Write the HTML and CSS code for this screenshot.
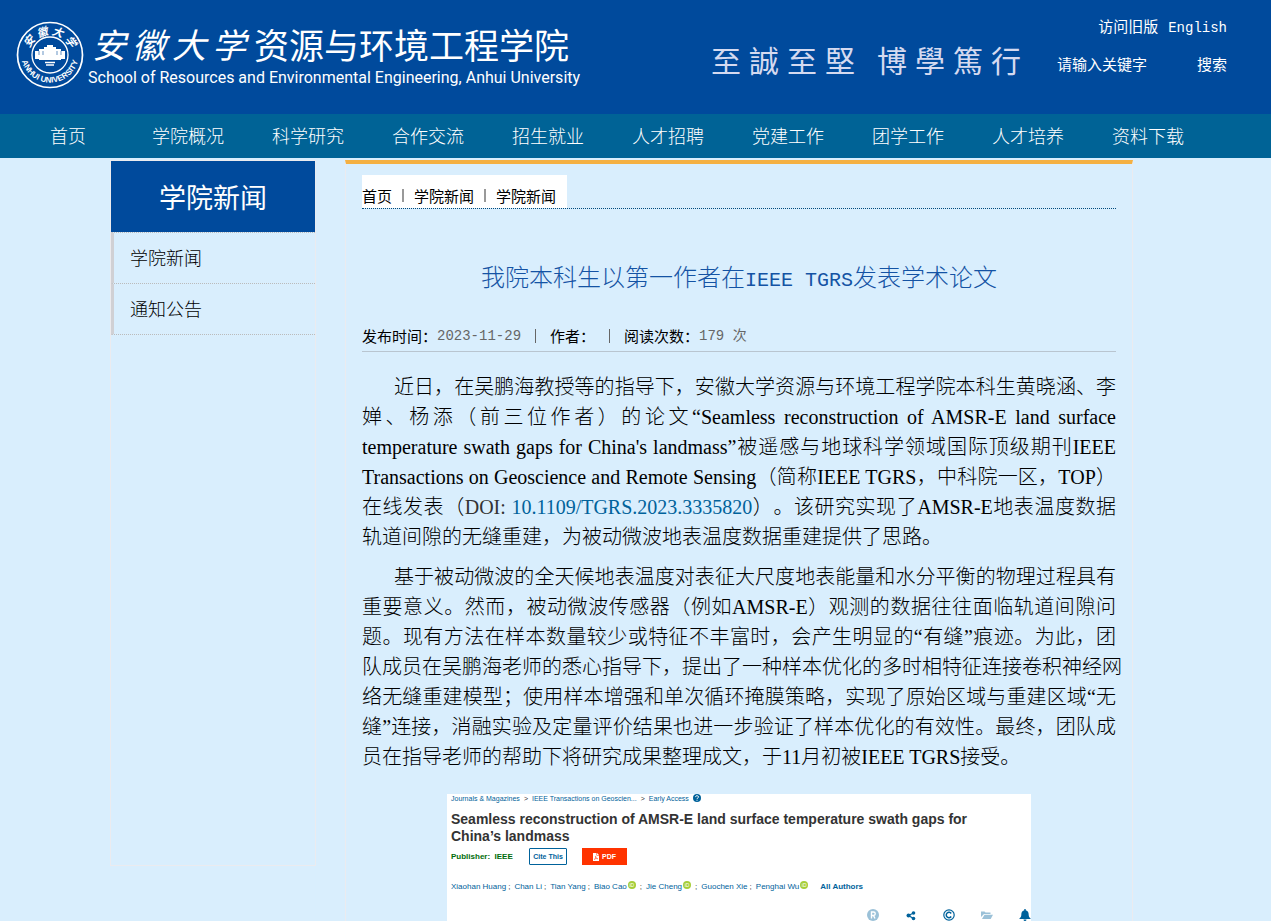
FILE: index.html
```html
<!DOCTYPE html>
<html lang="zh-CN">
<head>
<meta charset="utf-8">
<title>我院本科生以第一作者在IEEE TGRS发表学术论文</title>
<link rel="stylesheet" href="styles.css">
</head>
<body>
<header class="header">
  <a class="logo" href="#">
    <svg class="emblem" viewBox="0 0 68 68" aria-hidden="true">
      <defs>
        <path id="arc-bottom" d="M5.500 38 A29 29 0 0 0 62.500 38"/>
        <path id="arc-top" d="M12 36 A22 22 0 0 1 56 36"/>
      </defs>
      <circle cx="34" cy="34" r="32.500" fill="none" stroke="#fff" stroke-width="1.700"/>
      <circle cx="34" cy="34" r="18" fill="none" stroke="#fff" stroke-width="1.300"/>
      <path fill="#fff" d="M19 30h4v-2h5v-2h3v-2h6v2h3v2h5v2h4v8h-4v1H23v-1h-4z"/>
      <path stroke="#004a9c" stroke-width=".6" d="M23 30v4M27 30v4M41 30v4M45 30v4"/>
      <path stroke="#fff" stroke-width="1.500" d="M29 41.500h10M30 44h8"/>
      <text class="emblem-cn"><textPath href="#arc-top" startOffset="50%" text-anchor="middle">安 徽 大 学</textPath></text>
      <text class="emblem-en"><textPath href="#arc-bottom" startOffset="50%" text-anchor="middle">ANHUI UNIVERSITY</textPath></text>
    </svg>
    <span class="names">
      <span class="cn">
        <span class="brush"><i>安</i><i>徽</i><i>大</i><i>学</i></span>
        <span class="school">资源与环境工程学院</span>
      </span>
      <span class="en">School of Resources and Environmental Engineering, Anhui University</span>
    </span>
  </a>
  <div class="motto"><span>至</span><span>誠</span><span>至</span><span>堅</span><span class="second">博</span><span>學</span><span>篤</span><span>行</span></div>
  <div class="tools">
    <div class="links"><a href="#">访问旧版</a><a class="mono" href="#">English</a></div>
    <form class="search">
      <input type="text" aria-label="请输入关键字" placeholder="请输入关键字">
      <button type="button">搜索</button>
    </form>
  </div>
</header>
<nav class="nav">
  <a href="#">首页</a><a href="#">学院概况</a><a href="#">科学研究</a><a href="#">合作交流</a><a href="#">招生就业</a><a href="#">人才招聘</a><a href="#">党建工作</a><a href="#">团学工作</a><a href="#">人才培养</a><a href="#">资料下载</a>
</nav>
<div class="page">
  <aside class="side">
    <h2>学院新闻</h2>
    <a href="#">学院新闻</a>
    <a href="#">通知公告</a>
  </aside>
  <main class="main">
    <div class="crumbs"><div class="path"><a href="#">首页</a><i></i><a href="#">学院新闻</a><i></i><a href="#">学院新闻</a></div></div>
    <h1>我院本科生以第一作者在<span>IEEE TGRS</span>发表学术论文</h1>
    <div class="meta">
      <span>发布时间：</span><em>2023-11-29</em><i></i><span>作者：</span><i></i><span>阅读次数：</span><em>179 次</em>
    </div>
    <article class="text">
      <p>近日，在吴鹏海教授等的指导下，安徽大学资源与环境工程学院本科生黄晓涵、李婵、杨添（前三位作者）的论文“Seamless reconstruction of AMSR-E land surface temperature swath gaps for China's landmass”被遥感与地球科学领域国际顶级期刊IEEE Transactions on Geoscience and Remote Sensing（简称IEEE TGRS，中科院一区，TOP）在线发表（<span class="doi">DOI: </span><a href="#">10.1109/TGRS.2023.3335820</a>）。该研究实现了AMSR-E地表温度数据轨道间隙的无缝重建，为被动微波地表温度数据重建提供了思路。</p>
      <p>基于被动微波的全天候地表温度对表征大尺度地表能量和水分平衡的物理过程具有重要意义。然而，被动微波传感器（例如AMSR-E）观测的数据往往面临轨道间隙问题。现有方法在样本数量较少或特征不丰富时，会产生明显的“有缝”痕迹。为此，团<span class="keep">队成员在吴鹏海老师的悉心指导下，提出了一种样本优化的多时相特征连接卷积神经网</span>络无缝重建模型；使用样本增强和单次循环掩膜策略，实现了原始区域与重建区域“无缝”连接，消融实验及定量评价结果也进一步验证了样本优化的有效性。最终，团队成员在指导老师的帮助下将研究成果整理成文，于11月初被IEEE TGRS接受。</p>
    </article>
    <section class="paper" lang="en">
      <div class="trail"><a href="#">Journals &amp; Magazines</a><span>&gt;</span><a href="#">IEEE Transactions on Geoscien...</a><span>&gt;</span><a href="#">Early Access</a>
        <svg viewBox="0 0 16 16" aria-hidden="true"><circle cx="8" cy="8" r="8" fill="#00629b"/><path d="M5 6.200C5 2.500 11 2.500 11 6c0 2-3 2-3 4M8 11.500v2" fill="none" stroke="#fff" stroke-width="2"/></svg>
      </div>
      <h3>Seamless reconstruction of AMSR-E land surface temperature swath gaps for<br>China’s landmass</h3>
      <div class="actions">
        <b>Publisher:&nbsp; IEEE</b>
        <button class="cite" type="button">Cite This</button>
        <button class="pdf" type="button"><svg viewBox="0 0 12 16" aria-hidden="true"><path fill="#fff" d="M0 0h7v5h5v11H0zM8 0l4 4H8z"/><path d="M2.500 13c2-1 4-5 3-6.500S4 10 9.500 11.500C7 10.500 4 11.500 2.500 13z" fill="none" stroke="#ff3300"/></svg>PDF</button>
      </div>
      <div class="authors">
        <a href="#">Xiaohan Huang</a><s>;</s><a href="#">Chan Li</a><s>;</s><a href="#">Tian Yang</a><s>;</s><a href="#">Biao Cao</a><u>iD</u><s>;</s><a href="#">Jie Cheng</a><u>iD</u><s>;</s><a href="#">Guochen Xie</a><s>;</s><a href="#">Penghai Wu</a><u>iD</u><a class="all" href="#">All Authors</a>
      </div>
      <div class="icons">
        <svg class="dim" viewBox="0 0 12 12" aria-hidden="true"><circle cx="6" cy="6" r="6"/><path d="M4.500 9.500v-6.500h2a1.700 1.700 0 0 1 0 3.500h-2M6.500 6.500l1.500 3" fill="none" stroke="#fff" stroke-width="1.400"/></svg>
        <svg viewBox="0 0 12 12" aria-hidden="true"><circle cx="3.500" cy="6.500" r="2"/><circle cx="8.500" cy="4" r="1.800"/><circle cx="8.500" cy="9.500" r="1.800"/><path d="M8.500 4l-5 2.500 5 3" fill="none" stroke="#00629b" stroke-width="1.200"/></svg>
        <svg viewBox="0 0 12 12" aria-hidden="true"><circle cx="6" cy="6" r="5.200" fill="none" stroke="#00629b" stroke-width="1.200"/><path d="M8.200 4.500a2.700 2.700 0 1 0 0 3" fill="none" stroke="#00629b" stroke-width="1.500"/></svg>
        <svg class="dim" viewBox="0 0 12 12" aria-hidden="true"><path d="M0 8V2.500h3.500l1 1H9.500v1.500H3z"/><path d="M3.500 5.700H12L9.700 10H1z"/></svg>
        <svg viewBox="0 0 12 12" aria-hidden="true"><path d="M5.300 0h1.400v1.200c2.500.6 3 2.500 3 4.800 0 1.500.8 2.500 1.800 3.300v.7H.5v-.7c1-.8 1.800-1.800 1.800-3.300 0-2.300.5-4.200 3-4.800zM4.500 10.500h3a1.500 1.500 0 0 1-3 0z"/></svg>
      </div>
    </section>
  </main>
</div>
</body>
</html>
```
FILE: styles.css
```css
* { box-sizing: border-box; }
body {
  margin: 0;
  min-height: 100vh;
  display: flex;
  flex-direction: column;
  background: #d9eefd;
  color: #000;
  font: 15px "Noto Sans CJK SC", sans-serif;
  font-weight: 300;
  text-spacing-trim: space-all;
}
a { color: inherit; text-decoration: none; }
i { font-style: normal; }
h1, h2, h3, p { margin: 0; font-weight: inherit; }

.header {
  display: flex;
  align-items: flex-start;
  height: 114px;
  padding: 0 44px 0 16px;
  background: #004a9c;
  color: #fff;
}
.logo { display: flex; gap: 4px; padding-top: 21px; }
.emblem { width: 68px; height: 68px; }
.emblem-cn { fill: #fff; font: italic bold 11px "Noto Sans CJK SC", sans-serif; }
.emblem-en { fill: #fff; font: bold 8px "Liberation Sans", sans-serif; }
.names { display: flex; flex-direction: column; white-space: nowrap; }
.cn { display: flex; gap: 8px; padding-left: 4px; line-height: 46px; }
.brush { display: flex; gap: 6px; }
.brush i { font-size: 34px; font-style: italic; font-weight: 400; }
.school { font-size: 35px; font-weight: 400; }
.en { font: 16px/22px Roboto, sans-serif; }
.motto {
  display: flex;
  gap: 8px;
  margin-left: auto;
  padding-top: 35px;
  color: #d5daf0;
  font: 30px/48px "Noto Sans CJK TC", sans-serif;
}
.motto .second { margin-left: 14px; }
.tools { margin-left: 36px; padding-top: 15px; }
.links { display: flex; justify-content: flex-end; align-items: baseline; gap: 10px; line-height: 22px; font-weight: 400; }
.mono { font: 14px/22px "Liberation Mono", monospace; }
.search { display: flex; justify-content: space-between; margin-top: 14px; }
.search input, .search button {
  padding: 0;
  border: 0;
  background: none;
  color: #fff;
  font: 15px/22px "Noto Sans CJK SC", sans-serif;
}
.search input { width: 140px; }
.search input::placeholder { color: #fff; }

.nav {
  display: flex;
  height: 44px;
  padding-left: 8px;
  background: #006396;
  color: #fff;
  font-size: 18px;
  line-height: 42px;
}
.nav a { flex: 0 0 120px; text-align: center; }

.page {
  flex: 1;
  display: flex;
  align-items: flex-start;
  width: 100%;
  max-width: 1051px;
  margin: 0 auto;
  padding: 2px 28px 0 0;
}
.side {
  flex: 0 0 206px;
  min-height: 706px;
  margin-right: 29px;
  border: 1px solid #ebebef;
}
.side h2 {
  background: #004a9c;
  color: #fff;
  font-size: 27px;
  font-weight: 400;
  line-height: 71px;
  text-align: center;
}
.side a {
  display: block;
  padding: 0 0 2px 16px;
  border-left: 3px solid #d0d0d4;
  border-top: 1px dotted #bbb;
  font-size: 18px;
  line-height: 48px;
}
.side a:last-child { border-bottom: 1px dotted #bbb; }

.main {
  flex: 1;
  min-width: 0;
  align-self: stretch;
  display: flex;
  flex-direction: column;
  padding: 11px 16px 0;
  border: 1px solid #ebebef;
  border-top: 4px solid #f4b042;
  border-bottom: 0;
}
.crumbs { border-bottom: 1px dotted #004a7c; }
.path {
  display: flex;
  align-items: center;
  width: 205px;
  height: 33px;
  padding-top: 8px;
  background: #fff;
  font-weight: 400;
}
.path i { width: 2px; height: 13px; margin: 0 10px; background: #999; }
.main h1 {
  padding-top: 44px;
  color: #1453a4;
  font-size: 24px;
  line-height: 46px;
  text-align: center;
}
.main h1 span { font: 20px "Liberation Mono", monospace; }
.meta {
  display: flex;
  align-items: center;
  height: 32px;
  margin-top: 21px;
  border-bottom: 1px solid #b9c5d0;
  font-weight: 400;
}
.meta em { color: #666; font: 14px/22px "Liberation Mono", "Noto Sans CJK SC", monospace; }
.meta i { width: 1px; height: 14px; margin: 0 14px; background: #666; }
.text {
  padding-top: 20px;
  font: 300 20px/30px "Liberation Serif", "Noto Sans CJK SC", serif;
  text-align: justify;
}
.text p { margin-bottom: 10px; text-indent: 32px; }
.text a { color: #00629b; }
.doi { color: #333; }
.keep { white-space: nowrap; }

.paper {
  flex: 1;
  align-self: center;
  width: 584px;
  max-width: 100%;
  margin: 12px 0 0;
  padding: 0 4px;
  background: #fff;
  color: #333;
  font: 8px "Liberation Sans", sans-serif;
}
.paper a { color: #00629b; }
.trail { display: flex; align-items: center; gap: 4px; height: 8px; font-size: 7px; }
.trail svg { width: 8px; height: 8px; }
.paper h3 { padding-top: 9px; font-size: 14px; line-height: 17px; font-weight: 700; }
.actions { display: flex; align-items: center; padding-top: 3px; }
.actions b { width: 78px; color: #006b0a; }
.actions button { height: 17px; padding: 0; font: bold 7px "Liberation Sans", sans-serif; }
.actions .cite { width: 38px; border: 1px solid #00629b; border-radius: 1px; background: #fff; color: #00629b; }
.actions .pdf {
  display: flex;
  align-items: center;
  justify-content: center;
  gap: 3px;
  width: 45px;
  margin-left: 15px;
  border: 0;
  background: #ff3300;
  color: #fff;
}
.pdf svg { width: 6px; height: 8px; }
.authors { display: flex; align-items: center; height: 12px; margin-top: 15px; white-space: nowrap; }
.authors s { margin: 0 4px 0 2px; text-decoration: none; }
.authors u {
  width: 8px;
  height: 8px;
  margin: 0 2px 2px 1px;
  border-radius: 50%;
  background: #a6ce39;
  color: #fff;
  font-size: 5px;
  line-height: 8px;
  text-align: center;
  text-decoration: none;
}
.authors .all { margin-left: 10px; font-weight: 700; }
.icons { display: flex; justify-content: flex-end; gap: 26px; margin-top: 17px; margin-right: -4px; height: 11px; }
.icons svg { width: 12px; height: 12px; fill: #00629b; }
.icons .dim { fill: #9bc1d8; }
```
